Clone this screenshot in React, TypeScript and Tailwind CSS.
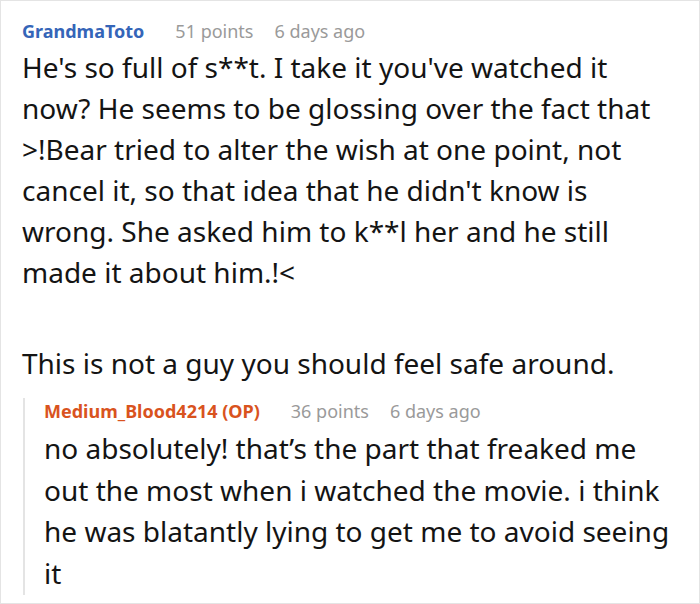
import React from "react";

export default function App() {
  return (
    <div className="w-[700px] h-[604px] bg-white border border-[#e4e4e4] overflow-hidden" style={{ fontFamily: '"Noto Sans", sans-serif' }}>
      <div className="pl-[21px] pr-[18px] pt-[17px]">
        <div className="flex items-baseline text-[18px] leading-[26px]">
          <span className="font-bold text-[#3565b8]">GrandmaToto</span>
          <span className="ml-[31px] text-[#9a9a9a]">51 points</span>
          <span className="ml-[21px] text-[#9a9a9a]">6 days ago</span>
        </div>
        <div className="text-[28px] leading-[41px] text-[#141414] mt-[3px]">
          <p>He's so full of s**t. I take it you've watched it now? He seems to be glossing over the fact that &gt;!Bear tried to alter the wish at one point, not cancel it, so that idea that he didn't know is wrong. She asked him to k**l her and he still made it about him.!&lt;</p>
          <p className="mt-[50px]">This is not a guy you should feel safe around.</p>
        </div>
        <div className="mt-[14px] ml-[1px] border-l-2 border-[#e4e4e4] pl-[19px]">
          <div className="flex items-baseline text-[18px] leading-[26px]">
            <span className="font-bold text-[#d9531e]">Medium_Blood4214 (OP)</span>
            <span className="ml-[31px] text-[#9a9a9a]">36 points</span>
            <span className="ml-[21px] text-[#9a9a9a]">6 days ago</span>
          </div>
          <p className="text-[28px] leading-[41.7px] text-[#141414] mt-[4px]">
            no absolutely! that’s the part that freaked me out the most when i watched the movie. i think he was blatantly lying to get me to avoid seeing it
          </p>
        </div>
      </div>
    </div>
  );
}
